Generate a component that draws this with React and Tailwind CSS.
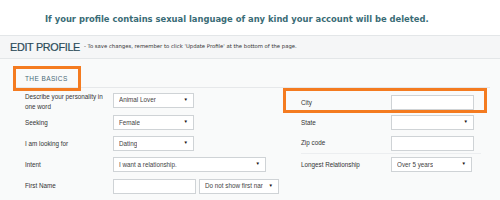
import React from 'react';

const orange = 'border-[3px] border-[#f47b20]';

const Select = ({ value, w }) => (
  <div
    className={`h-[15px] bg-white border border-[#cfd3d6] flex items-center justify-between pl-[5px] pr-[5px] text-[6.3px] text-[#444] ${w}`}
  >
    <span className="whitespace-nowrap overflow-hidden">{value}</span>
    <span className="text-[4.5px] text-[#111] leading-none">▼</span>
  </div>
);

const Input = ({ w }) => <div className={`h-[15px] bg-white border border-[#cfd3d6] ${w}`} />;

const Label = ({ children, w = 'w-[88px]', extra = '' }) => (
  <div className={`${w} shrink-0 text-[6.3px] leading-[10px] text-[#333] whitespace-nowrap ${extra}`}>{children}</div>
);

export default function App() {
  return (
    <div
      className="w-[500px] h-[200px] overflow-hidden bg-white relative"
      style={{ fontFamily: '"Liberation Sans", Arial, sans-serif' }}
    >
      {/* warning */}
      <div className="h-[35px] flex items-center pl-[45px] pt-[4px]">
        <p
          className="text-[8.4px] font-bold text-[#3a6c76] whitespace-nowrap"
          style={{ fontFamily: '"DejaVu Sans", sans-serif' }}
        >
          If your profile contains sexual language of any kind your account will be deleted.
        </p>
      </div>

      {/* edit profile bar */}
      <div className="h-[24px] border-t border-b border-[#e3e6e8] bg-[#f5f6f7] flex items-center pl-[10px]">
        <span className="text-[10.8px] text-[#2a4a58] tracking-[-0.3px] [-webkit-text-stroke:0.2px_#2a4a58]">
          EDIT PROFILE
        </span>
        <span
          className="ml-[4px] text-[5.3px] text-[#333] whitespace-nowrap"
          style={{ fontFamily: '"DejaVu Sans", sans-serif' }}
        >
          - To save changes, remember to click 'Update Profile' at the bottom of the page.
        </span>
      </div>

      {/* form */}
      <div className="bg-[#f9fafa] h-[141px]">
        <div className="h-[29px] mx-[13px] mr-[10px] border-b border-[#e6e8ea] flex items-end pl-[12px] pb-[3px]">
          <span className="text-[6.5px] text-[#4a6b78] tracking-[0.4px]">THE BASICS</span>
        </div>

        <div className="flex pl-[25px]">
          <div className="w-[276px]">
            <div className="h-[24px] flex items-center">
              <Label extra="pt-[3px]">
                Describe your personality in
                <br />
                one word
              </Label>
              <Select value="Animal Lover" w="w-[81px]" />
            </div>
            <div className="h-[21px] flex items-center">
              <Label>Seeking</Label>
              <Select value="Female" w="w-[81px]" />
            </div>
            <div className="h-[21px] flex items-center">
              <Label>I am looking for</Label>
              <Select value="Dating" w="w-[81px]" />
            </div>
            <div className="h-[21px] flex items-center">
              <Label>Intent</Label>
              <Select value="I want a relationship." w="w-[153px]" />
            </div>
            <div className="h-[22px] flex items-center gap-[3px]">
              <Label w="w-[85px]">First Name</Label>
              <Input w="w-[83px]" />
              <Select value="Do not show first nar" w="w-[80px]" />
            </div>
          </div>

          <div className="w-[180px]">
            <div className="h-[24px] flex items-center pt-[5px]">
              <Label w="w-[90px]">City</Label>
              <Input w="w-[83px]" />
            </div>
            <div className="h-[21px] flex items-center">
              <Label w="w-[90px]">State</Label>
              <Select value="" w="w-[83px]" />
            </div>
            <div className="h-[21px] flex items-center border-b border-[#eceef0]">
              <Label w="w-[90px]">Zip code</Label>
              <Input w="w-[83px]" />
            </div>
            <div className="h-[21px] flex items-center">
              <Label w="w-[90px]">Longest Relationship</Label>
              <Select value="Over 5 years" w="w-[81px]" />
            </div>
          </div>
        </div>
      </div>

      {/* highlight annotations */}
      <div className={`absolute left-[13px] top-[66px] w-[68px] h-[25px] ${orange}`} />
      <div className={`absolute left-[283px] top-[88px] w-[204px] h-[25px] ${orange}`} />
    </div>
  );
}
